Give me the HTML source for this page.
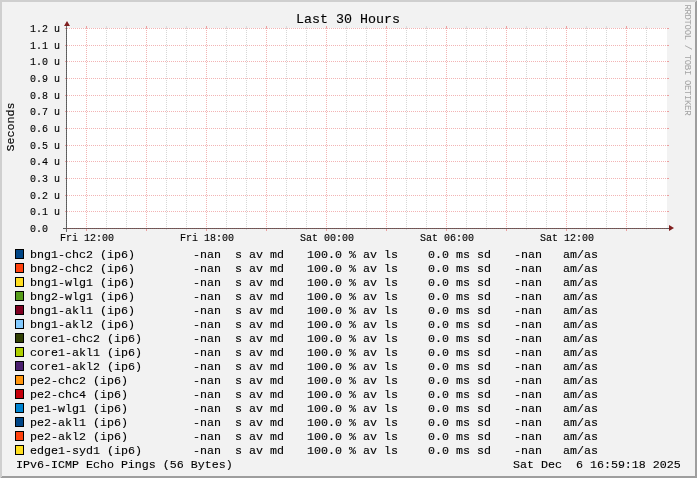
<!DOCTYPE html><html><head><meta charset="utf-8"><title>Last 30 Hours</title><style>
html,body{margin:0;padding:0;background:#f2f2f2;}
body{width:697px;height:478px;position:relative;overflow:hidden;font-family:"Liberation Mono",monospace;color:#000;}
.g{position:absolute;left:0;top:0;}
.t{position:absolute;white-space:pre;line-height:1;margin:0;padding:0;-webkit-text-stroke:0.12px;}
#w{position:absolute;left:0;top:0;width:697px;height:478px;will-change:transform;transform:translateZ(0);}
.l{font-size:11.67px;letter-spacing:-0.0031px;height:14px;line-height:14px;}
.a{font-size:10px;letter-spacing:-0.0010px;height:10px;line-height:10px;}
.b{position:absolute;box-sizing:border-box;width:9px;height:10px;border:1px solid #000;left:15px;}
</style></head><body><div id="w">
<svg class="g" width="697" height="478" viewBox="0 0 697 478" shape-rendering="crispEdges">
<rect x="0" y="0" width="697" height="478" fill="#f2f2f2"/>
<path d="M0 0H697 L695 2H2V476 L0 478Z" fill="#cfcfcf"/>
<path d="M697 478H0 L2 476H695V2 L697 0Z" fill="#9e9e9e"/>
<rect x="67" y="28" width="600" height="200" fill="#fff"/>
<path d="M106.5 28V229" stroke="#d6d6d6" stroke-dasharray="1 1"/>
<path d="M106.5 26V28M106.5 229V230" stroke="#dcdcdc"/>
<path d="M126.5 28V229" stroke="#d6d6d6" stroke-dasharray="1 1"/>
<path d="M126.5 26V28M126.5 229V230" stroke="#dcdcdc"/>
<path d="M166.5 28V229" stroke="#d6d6d6" stroke-dasharray="1 1"/>
<path d="M166.5 26V28M166.5 229V230" stroke="#dcdcdc"/>
<path d="M186.5 28V229" stroke="#d6d6d6" stroke-dasharray="1 1"/>
<path d="M186.5 26V28M186.5 229V230" stroke="#dcdcdc"/>
<path d="M226.5 28V229" stroke="#d6d6d6" stroke-dasharray="1 1"/>
<path d="M226.5 26V28M226.5 229V230" stroke="#dcdcdc"/>
<path d="M246.5 28V229" stroke="#d6d6d6" stroke-dasharray="1 1"/>
<path d="M246.5 26V28M246.5 229V230" stroke="#dcdcdc"/>
<path d="M286.5 28V229" stroke="#d6d6d6" stroke-dasharray="1 1"/>
<path d="M286.5 26V28M286.5 229V230" stroke="#dcdcdc"/>
<path d="M306.5 28V229" stroke="#d6d6d6" stroke-dasharray="1 1"/>
<path d="M306.5 26V28M306.5 229V230" stroke="#dcdcdc"/>
<path d="M346.5 28V229" stroke="#d6d6d6" stroke-dasharray="1 1"/>
<path d="M346.5 26V28M346.5 229V230" stroke="#dcdcdc"/>
<path d="M366.5 28V229" stroke="#d6d6d6" stroke-dasharray="1 1"/>
<path d="M366.5 26V28M366.5 229V230" stroke="#dcdcdc"/>
<path d="M406.5 28V229" stroke="#d6d6d6" stroke-dasharray="1 1"/>
<path d="M406.5 26V28M406.5 229V230" stroke="#dcdcdc"/>
<path d="M426.5 28V229" stroke="#d6d6d6" stroke-dasharray="1 1"/>
<path d="M426.5 26V28M426.5 229V230" stroke="#dcdcdc"/>
<path d="M466.5 28V229" stroke="#d6d6d6" stroke-dasharray="1 1"/>
<path d="M466.5 26V28M466.5 229V230" stroke="#dcdcdc"/>
<path d="M486.5 28V229" stroke="#d6d6d6" stroke-dasharray="1 1"/>
<path d="M486.5 26V28M486.5 229V230" stroke="#dcdcdc"/>
<path d="M526.5 28V229" stroke="#d6d6d6" stroke-dasharray="1 1"/>
<path d="M526.5 26V28M526.5 229V230" stroke="#dcdcdc"/>
<path d="M546.5 28V229" stroke="#d6d6d6" stroke-dasharray="1 1"/>
<path d="M546.5 26V28M546.5 229V230" stroke="#dcdcdc"/>
<path d="M586.5 28V229" stroke="#d6d6d6" stroke-dasharray="1 1"/>
<path d="M586.5 26V28M586.5 229V230" stroke="#dcdcdc"/>
<path d="M606.5 28V229" stroke="#d6d6d6" stroke-dasharray="1 1"/>
<path d="M606.5 26V28M606.5 229V230" stroke="#dcdcdc"/>
<path d="M646.5 28V229" stroke="#d6d6d6" stroke-dasharray="1 1"/>
<path d="M646.5 26V28M646.5 229V230" stroke="#dcdcdc"/>
<path d="M86.5 28V229" stroke="#f2b4b4" stroke-dasharray="1 1"/>
<path d="M86.5 26V28M86.5 229V231" stroke="#eaa0a0"/>
<path d="M146.5 28V229" stroke="#f2b4b4" stroke-dasharray="1 1"/>
<path d="M146.5 26V28M146.5 229V231" stroke="#eaa0a0"/>
<path d="M206.5 28V229" stroke="#f2b4b4" stroke-dasharray="1 1"/>
<path d="M206.5 26V28M206.5 229V231" stroke="#eaa0a0"/>
<path d="M266.5 28V229" stroke="#f2b4b4" stroke-dasharray="1 1"/>
<path d="M266.5 26V28M266.5 229V231" stroke="#eaa0a0"/>
<path d="M326.5 28V229" stroke="#f2b4b4" stroke-dasharray="1 1"/>
<path d="M326.5 26V28M326.5 229V231" stroke="#eaa0a0"/>
<path d="M386.5 28V229" stroke="#f2b4b4" stroke-dasharray="1 1"/>
<path d="M386.5 26V28M386.5 229V231" stroke="#eaa0a0"/>
<path d="M446.5 28V229" stroke="#f2b4b4" stroke-dasharray="1 1"/>
<path d="M446.5 26V28M446.5 229V231" stroke="#eaa0a0"/>
<path d="M506.5 28V229" stroke="#f2b4b4" stroke-dasharray="1 1"/>
<path d="M506.5 26V28M506.5 229V231" stroke="#eaa0a0"/>
<path d="M566.5 28V229" stroke="#f2b4b4" stroke-dasharray="1 1"/>
<path d="M566.5 26V28M566.5 229V231" stroke="#eaa0a0"/>
<path d="M626.5 28V229" stroke="#f2b4b4" stroke-dasharray="1 1"/>
<path d="M626.5 26V28M626.5 229V231" stroke="#eaa0a0"/>
<path d="M67 228.5H667" stroke="#f2b4b4" stroke-dasharray="1 1"/>
<path d="M65 228.5H66M667 228.5H669" stroke="#eaa0a0"/>
<path d="M67 211.5H667" stroke="#f2b4b4" stroke-dasharray="1 1"/>
<path d="M65 211.5H66M667 211.5H669" stroke="#eaa0a0"/>
<path d="M67 195.5H667" stroke="#f2b4b4" stroke-dasharray="1 1"/>
<path d="M65 195.5H66M667 195.5H669" stroke="#eaa0a0"/>
<path d="M67 178.5H667" stroke="#f2b4b4" stroke-dasharray="1 1"/>
<path d="M65 178.5H66M667 178.5H669" stroke="#eaa0a0"/>
<path d="M67 161.5H667" stroke="#f2b4b4" stroke-dasharray="1 1"/>
<path d="M65 161.5H66M667 161.5H669" stroke="#eaa0a0"/>
<path d="M67 145.5H667" stroke="#f2b4b4" stroke-dasharray="1 1"/>
<path d="M65 145.5H66M667 145.5H669" stroke="#eaa0a0"/>
<path d="M67 128.5H667" stroke="#f2b4b4" stroke-dasharray="1 1"/>
<path d="M65 128.5H66M667 128.5H669" stroke="#eaa0a0"/>
<path d="M67 111.5H667" stroke="#f2b4b4" stroke-dasharray="1 1"/>
<path d="M65 111.5H66M667 111.5H669" stroke="#eaa0a0"/>
<path d="M67 95.5H667" stroke="#f2b4b4" stroke-dasharray="1 1"/>
<path d="M65 95.5H66M667 95.5H669" stroke="#eaa0a0"/>
<path d="M67 78.5H667" stroke="#f2b4b4" stroke-dasharray="1 1"/>
<path d="M65 78.5H66M667 78.5H669" stroke="#eaa0a0"/>
<path d="M67 61.5H667" stroke="#f2b4b4" stroke-dasharray="1 1"/>
<path d="M65 61.5H66M667 61.5H669" stroke="#eaa0a0"/>
<path d="M67 45.5H667" stroke="#f2b4b4" stroke-dasharray="1 1"/>
<path d="M65 45.5H66M667 45.5H669" stroke="#eaa0a0"/>
<path d="M67 28.5H667" stroke="#f2b4b4" stroke-dasharray="1 1"/>
<path d="M65 28.5H66M667 28.5H669" stroke="#eaa0a0"/>
<rect x="63" y="228" width="608" height="1" fill="#5c5c5c"/>
<path d="M67 228.5H667" stroke="#8a5555" stroke-dasharray="1 1"/>
<rect x="66" y="24" width="1" height="208" fill="#6c6c6c"/>
<path d="M66.5 28V229" stroke="#585858" stroke-dasharray="1 1"/>
</svg>
<svg class="g" width="697" height="478" viewBox="0 0 697 478">
<path d="M64 26 L70 26 L67 21Z" fill="#801f1f"/>
<path d="M669 225 L669 231 L674 228Z" fill="#801f1f"/>
</svg>
<div class="t" style="left:296px;top:11.9px;font-size:13.33px;letter-spacing:0.0008px;height:16px;line-height:16px;">Last 30 Hours</div>
<div class="t a" style="left:30px;width:30px;text-align:right;top:225.00px;">0.0  </div>
<div class="t a" style="left:30px;width:30px;text-align:right;top:208.00px;">0.1 u</div>
<div class="t a" style="left:30px;width:30px;text-align:right;top:192.00px;">0.2 u</div>
<div class="t a" style="left:30px;width:30px;text-align:right;top:175.00px;">0.3 u</div>
<div class="t a" style="left:30px;width:30px;text-align:right;top:158.00px;">0.4 u</div>
<div class="t a" style="left:30px;width:30px;text-align:right;top:142.00px;">0.5 u</div>
<div class="t a" style="left:30px;width:30px;text-align:right;top:125.00px;">0.6 u</div>
<div class="t a" style="left:30px;width:30px;text-align:right;top:108.00px;">0.7 u</div>
<div class="t a" style="left:30px;width:30px;text-align:right;top:92.00px;">0.8 u</div>
<div class="t a" style="left:30px;width:30px;text-align:right;top:75.00px;">0.9 u</div>
<div class="t a" style="left:30px;width:30px;text-align:right;top:58.00px;">1.0 u</div>
<div class="t a" style="left:30px;width:30px;text-align:right;top:42.00px;">1.1 u</div>
<div class="t a" style="left:30px;width:30px;text-align:right;top:25.00px;">1.2 u</div>
<div class="t a" style="left:60px;top:234.00px;">Fri 12:00</div>
<div class="t a" style="left:180px;top:234.00px;">Fri 18:00</div>
<div class="t a" style="left:300px;top:234.00px;">Sat 00:00</div>
<div class="t a" style="left:420px;top:234.00px;">Sat 06:00</div>
<div class="t a" style="left:540px;top:234.00px;">Sat 12:00</div>
<div class="t l" style="left:0;top:0;width:49px;text-align:center;transform-origin:0 0;transform:translate(3.5px,151.5px) rotate(-90deg);">Seconds</div>
<div class="t" style="left:0;top:0;font-size:9px;letter-spacing:-0.3709px;-webkit-text-stroke:0;height:10px;line-height:10px;color:#a4a4a4;transform-origin:0 0;transform:translate(692px,4.5px) rotate(90deg);">RRDTOOL / TOBI OETIKER</div>
<div class="b" style="top:249px;background:#004586;"></div>
<div class="t l" style="left:30px;top:248px;">bng1-chc2 (ip6)</div>
<div class="t l" style="left:186px;top:248px;"> -nan  s av md</div>
<div class="t l" style="left:307px;top:248px;">100.0 % av ls</div>
<div class="t l" style="left:414px;top:248px;">  0.0 ms sd</div>
<div class="t l" style="left:507px;top:248px;"> -nan   am/as</div>
<div class="b" style="top:263px;background:#ff420e;"></div>
<div class="t l" style="left:30px;top:262px;">bng2-chc2 (ip6)</div>
<div class="t l" style="left:186px;top:262px;"> -nan  s av md</div>
<div class="t l" style="left:307px;top:262px;">100.0 % av ls</div>
<div class="t l" style="left:414px;top:262px;">  0.0 ms sd</div>
<div class="t l" style="left:507px;top:262px;"> -nan   am/as</div>
<div class="b" style="top:277px;background:#ffde20;"></div>
<div class="t l" style="left:30px;top:276px;">bng1-wlg1 (ip6)</div>
<div class="t l" style="left:186px;top:276px;"> -nan  s av md</div>
<div class="t l" style="left:307px;top:276px;">100.0 % av ls</div>
<div class="t l" style="left:414px;top:276px;">  0.0 ms sd</div>
<div class="t l" style="left:507px;top:276px;"> -nan   am/as</div>
<div class="b" style="top:291px;background:#579d1c;"></div>
<div class="t l" style="left:30px;top:290px;">bng2-wlg1 (ip6)</div>
<div class="t l" style="left:186px;top:290px;"> -nan  s av md</div>
<div class="t l" style="left:307px;top:290px;">100.0 % av ls</div>
<div class="t l" style="left:414px;top:290px;">  0.0 ms sd</div>
<div class="t l" style="left:507px;top:290px;"> -nan   am/as</div>
<div class="b" style="top:305px;background:#7e0021;"></div>
<div class="t l" style="left:30px;top:304px;">bng1-akl1 (ip6)</div>
<div class="t l" style="left:186px;top:304px;"> -nan  s av md</div>
<div class="t l" style="left:307px;top:304px;">100.0 % av ls</div>
<div class="t l" style="left:414px;top:304px;">  0.0 ms sd</div>
<div class="t l" style="left:507px;top:304px;"> -nan   am/as</div>
<div class="b" style="top:319px;background:#83caff;"></div>
<div class="t l" style="left:30px;top:318px;">bng1-akl2 (ip6)</div>
<div class="t l" style="left:186px;top:318px;"> -nan  s av md</div>
<div class="t l" style="left:307px;top:318px;">100.0 % av ls</div>
<div class="t l" style="left:414px;top:318px;">  0.0 ms sd</div>
<div class="t l" style="left:507px;top:318px;"> -nan   am/as</div>
<div class="b" style="top:333px;background:#314004;"></div>
<div class="t l" style="left:30px;top:332px;">core1-chc2 (ip6)</div>
<div class="t l" style="left:186px;top:332px;"> -nan  s av md</div>
<div class="t l" style="left:307px;top:332px;">100.0 % av ls</div>
<div class="t l" style="left:414px;top:332px;">  0.0 ms sd</div>
<div class="t l" style="left:507px;top:332px;"> -nan   am/as</div>
<div class="b" style="top:347px;background:#aecf00;"></div>
<div class="t l" style="left:30px;top:346px;">core1-akl1 (ip6)</div>
<div class="t l" style="left:186px;top:346px;"> -nan  s av md</div>
<div class="t l" style="left:307px;top:346px;">100.0 % av ls</div>
<div class="t l" style="left:414px;top:346px;">  0.0 ms sd</div>
<div class="t l" style="left:507px;top:346px;"> -nan   am/as</div>
<div class="b" style="top:361px;background:#4b1f6f;"></div>
<div class="t l" style="left:30px;top:360px;">core1-akl2 (ip6)</div>
<div class="t l" style="left:186px;top:360px;"> -nan  s av md</div>
<div class="t l" style="left:307px;top:360px;">100.0 % av ls</div>
<div class="t l" style="left:414px;top:360px;">  0.0 ms sd</div>
<div class="t l" style="left:507px;top:360px;"> -nan   am/as</div>
<div class="b" style="top:375px;background:#ff950e;"></div>
<div class="t l" style="left:30px;top:374px;">pe2-chc2 (ip6)</div>
<div class="t l" style="left:186px;top:374px;"> -nan  s av md</div>
<div class="t l" style="left:307px;top:374px;">100.0 % av ls</div>
<div class="t l" style="left:414px;top:374px;">  0.0 ms sd</div>
<div class="t l" style="left:507px;top:374px;"> -nan   am/as</div>
<div class="b" style="top:389px;background:#c5000b;"></div>
<div class="t l" style="left:30px;top:388px;">pe2-chc4 (ip6)</div>
<div class="t l" style="left:186px;top:388px;"> -nan  s av md</div>
<div class="t l" style="left:307px;top:388px;">100.0 % av ls</div>
<div class="t l" style="left:414px;top:388px;">  0.0 ms sd</div>
<div class="t l" style="left:507px;top:388px;"> -nan   am/as</div>
<div class="b" style="top:403px;background:#0084d1;"></div>
<div class="t l" style="left:30px;top:402px;">pe1-wlg1 (ip6)</div>
<div class="t l" style="left:186px;top:402px;"> -nan  s av md</div>
<div class="t l" style="left:307px;top:402px;">100.0 % av ls</div>
<div class="t l" style="left:414px;top:402px;">  0.0 ms sd</div>
<div class="t l" style="left:507px;top:402px;"> -nan   am/as</div>
<div class="b" style="top:417px;background:#004586;"></div>
<div class="t l" style="left:30px;top:416px;">pe2-akl1 (ip6)</div>
<div class="t l" style="left:186px;top:416px;"> -nan  s av md</div>
<div class="t l" style="left:307px;top:416px;">100.0 % av ls</div>
<div class="t l" style="left:414px;top:416px;">  0.0 ms sd</div>
<div class="t l" style="left:507px;top:416px;"> -nan   am/as</div>
<div class="b" style="top:431px;background:#ff420e;"></div>
<div class="t l" style="left:30px;top:430px;">pe2-akl2 (ip6)</div>
<div class="t l" style="left:186px;top:430px;"> -nan  s av md</div>
<div class="t l" style="left:307px;top:430px;">100.0 % av ls</div>
<div class="t l" style="left:414px;top:430px;">  0.0 ms sd</div>
<div class="t l" style="left:507px;top:430px;"> -nan   am/as</div>
<div class="b" style="top:445px;background:#ffde20;"></div>
<div class="t l" style="left:30px;top:444px;">edge1-syd1 (ip6)</div>
<div class="t l" style="left:186px;top:444px;"> -nan  s av md</div>
<div class="t l" style="left:307px;top:444px;">100.0 % av ls</div>
<div class="t l" style="left:414px;top:444px;">  0.0 ms sd</div>
<div class="t l" style="left:507px;top:444px;"> -nan   am/as</div>
<div class="t l" style="left:16px;top:458px;">IPv6-ICMP Echo Pings (56 Bytes)</div>
<div class="t l" style="left:513px;top:458px;">Sat Dec  6 16:59:18 2025</div>
</div></body></html>
